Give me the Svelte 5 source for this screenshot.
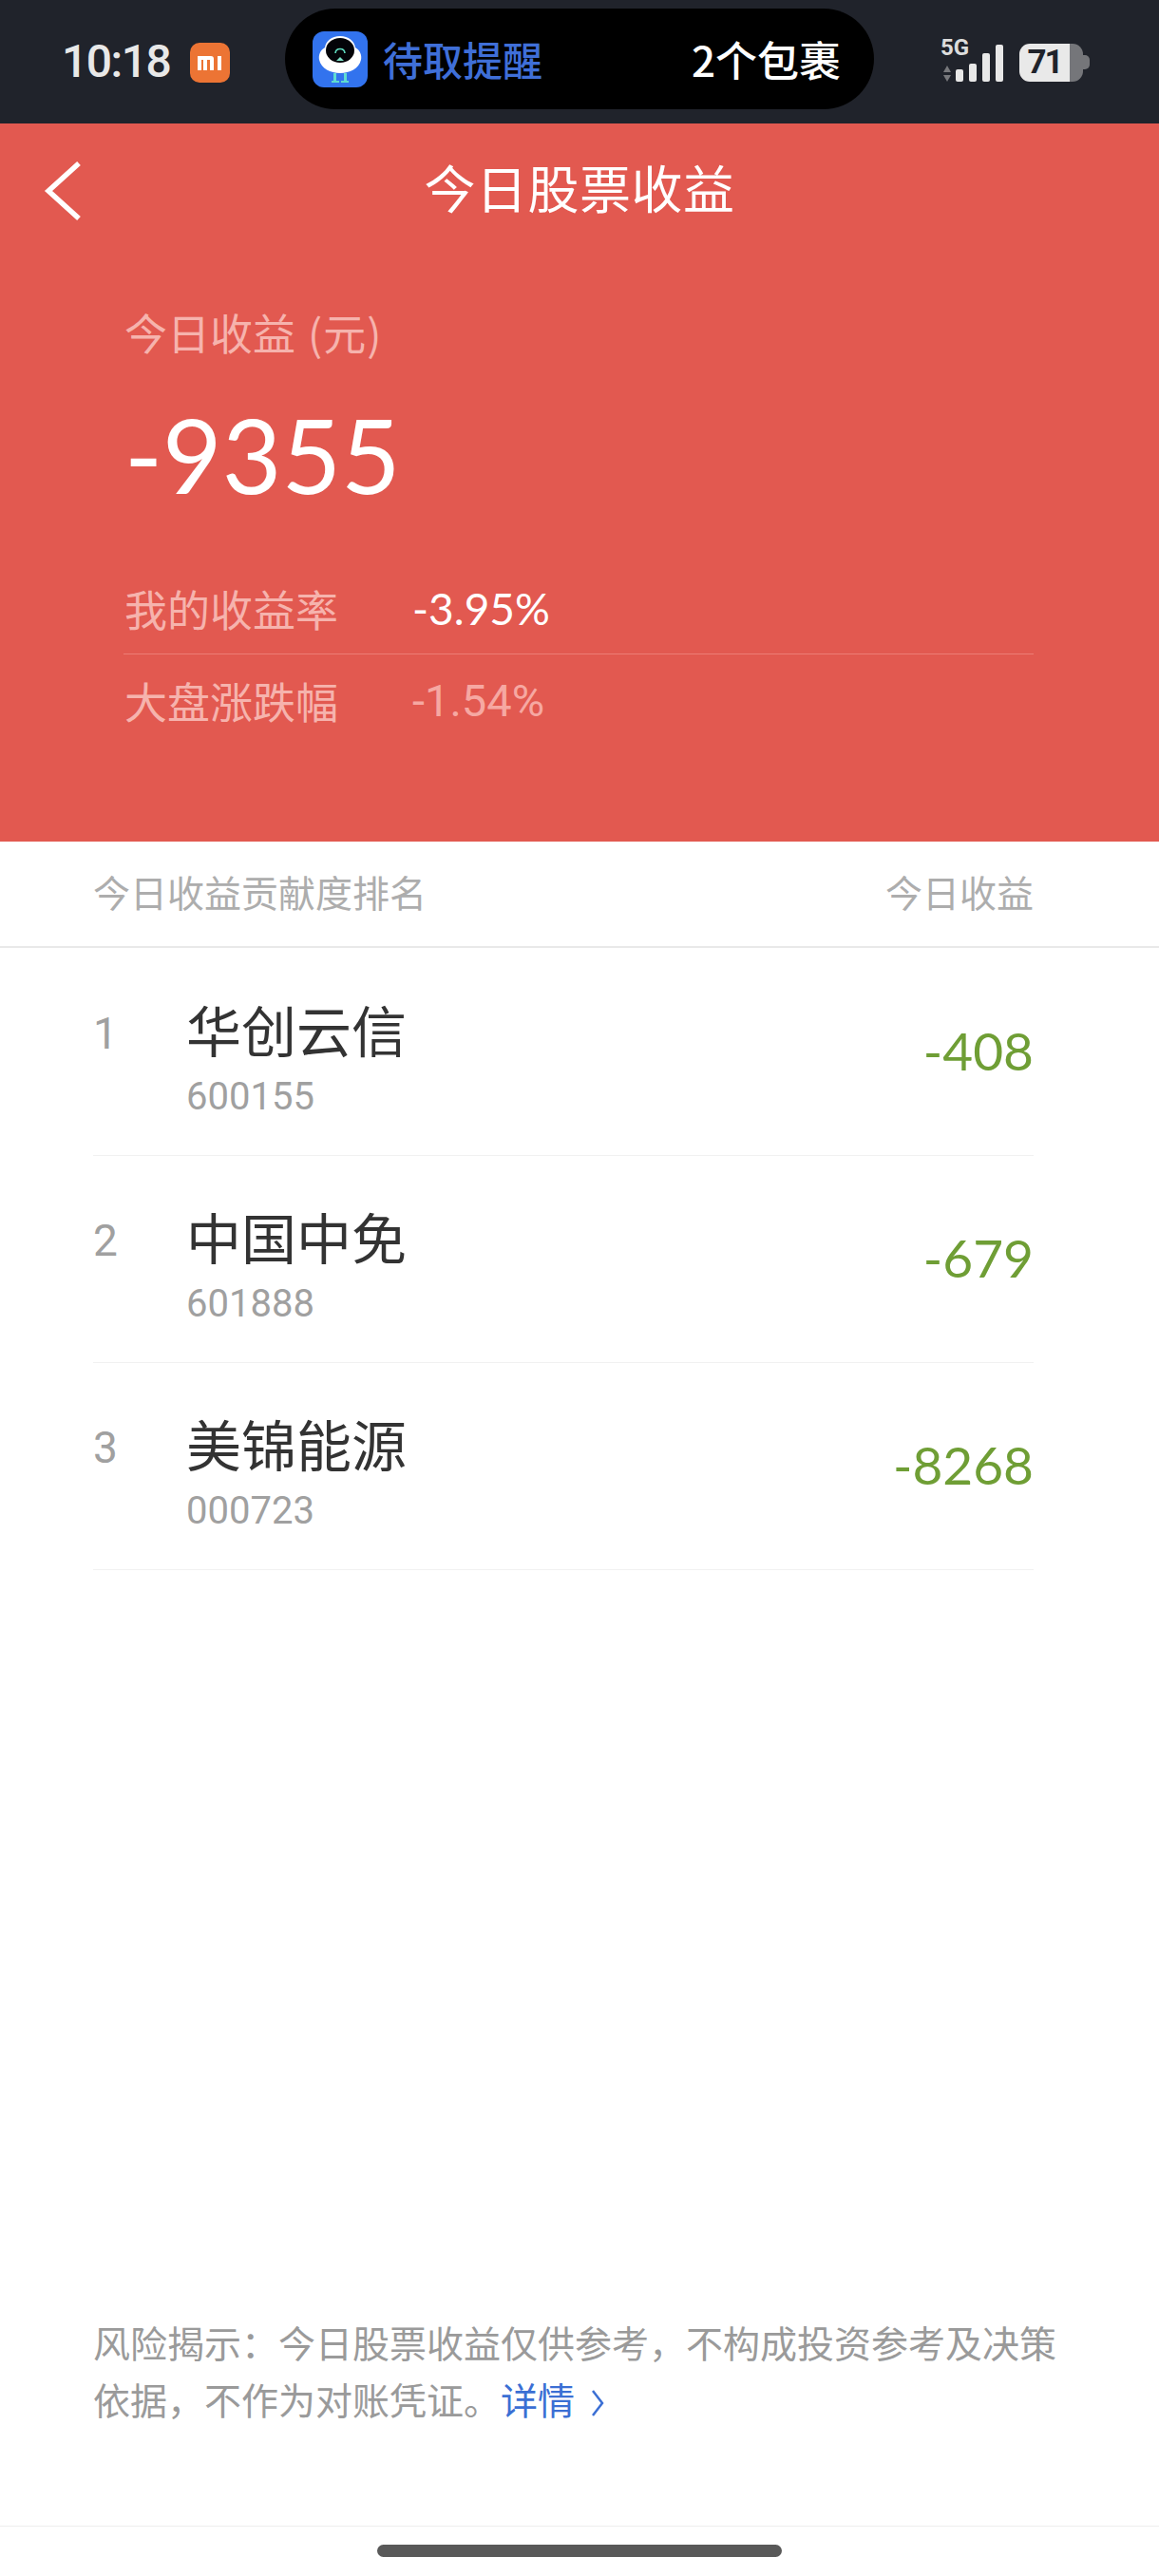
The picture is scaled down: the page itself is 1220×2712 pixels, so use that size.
<script>
  const rows = [
    { rank: 1, name: '华创云信', code: '600155', value: '-408' },
    { rank: 2, name: '中国中免', code: '601888', value: '-679' },
    { rank: 3, name: '美锦能源', code: '000723', value: '-8268' }
  ];
  const riskText = '风险揭示\uFF1A今日股票收益仅供参考\uFF0C不构成投资参考及决策依据\uFF0C不作为对账凭证\u3002';
</script>

<div class="page">
  <header class="status">
    <span class="time">10:18</span>
    <svg class="mi" viewBox="0 0 42 42" width="42" height="42" aria-hidden="true">
      <rect width="42" height="42" rx="10" fill="#ec7434"/>
      <path d="M8 14h14q3 0 3 3v12h-4V18h-3v11h-4V18h-2v11H8z M29 14h4v15h-4z" fill="#fff"/>
    </svg>
    <div class="island">
      <svg class="app" viewBox="0 0 58 59" width="58" height="59" aria-hidden="true">
        <rect width="58" height="59" rx="12" fill="#3273ee"/>
        <path d="M29 5c9 0 15 5 16 12 5 3 7 8 6 13-2 9-12 14-22 14S9 39 7 30c-1-5 1-10 6-13 1-7 7-12 16-12z" fill="#fff"/>
        <ellipse cx="29" cy="20" rx="15" ry="13" fill="#030308"/>
        <path d="M24 23c.5-6 9.500-6 10 0" fill="none" stroke="#5fdcc0" stroke-width="1.600"/>
        <path d="M29 27l4 4h-8z" fill="#7fe0c8"/>
        <path d="M22 44h3v8h3v2h-8v-2h2zM33 44h3v8h2v2h-8v-2h3z" fill="#5fdcd0"/>
      </svg>
      <span class="pending">待取提醒</span>
      <span class="parcels">2个包裹</span>
    </div>
    <div class="indicators">
      <div class="net">
        <span class="fiveg">5G</span>
        <svg viewBox="0 0 10 17" width="10" height="17" aria-hidden="true">
          <path d="M5 0l4 7H1z" fill="#77787c"/><path d="M5 17l4-7H1z" fill="#77787c"/>
        </svg>
      </div>
      <div class="bars">
        <i class="b1"></i><i class="b2"></i><i class="b3"></i><i class="b4"></i>
      </div>
      <div class="battery">
        <span class="level">71</span>
        <span class="rest"></span>
        <span class="cap"></span>
      </div>
    </div>
  </header>

  <section class="hero">
    <nav class="nav">
      <svg class="back" viewBox="0 0 40 66" width="40" height="66" aria-hidden="true">
        <path d="M37 4 5 33l32 29" fill="none" stroke="#fff" stroke-width="5.500"/>
      </svg>
      <h1>今日股票收益</h1>
    </nav>
    <div class="summary">
      <div class="label">今日收益 <span class="unit">(元)</span></div>
      <div class="total">-9355</div>
      <div class="stats">
        <div class="stat line">
          <span class="k">我的收益率</span><span class="v strong">-3.95%</span>
        </div>
        <div class="stat">
          <span class="k">大盘涨跌幅</span><span class="v alt">-1.54%</span>
        </div>
      </div>
    </div>
  </section>

  <div class="listhead">
    <span>今日收益贡献度排名</span><span>今日收益</span>
  </div>

  <ul class="list">
    {#each rows as r}
      <li class="row">
        <span class="rank">{r.rank}</span>
        <div class="stock">
          <div class="name">{r.name}</div>
          <div class="code">{r.code}</div>
        </div>
        <span class="value">{r.value}</span>
      </li>
    {/each}
  </ul>

  <p class="risk">{riskText}<span class="more">详情<svg viewBox="0 0 16 30" width="16" height="30" aria-hidden="true"><path d="M3 2l10 13L3 28" fill="none" stroke="#3b6fd4" stroke-width="2.500"/></svg></span></p>

  <footer class="home"><span class="pill"></span></footer>
</div>

<style>
  :global(body) { margin: 0; background: #fff; }
  .page {
    width: 1220px;
    height: 2712px;
    display: flex;
    flex-direction: column;
    font-family: "Noto Sans CJK SC", "Noto Sans", sans-serif;
    overflow: hidden;
  }
  .status {
    height: 130px;
    box-sizing: border-box;
    background: #20232b;
    display: flex;
    align-items: center;
    padding-left: 65px;
  }
  .time {
    width: 135px;
    flex: none;
    font: 500 48px/1 Roboto, sans-serif;
    color: #e8e8e8;
    letter-spacing: -1.500px;
  }
  .mi { margin-top: 2px; flex: none; }
  .island {
    margin-left: 58px;
    margin-top: -6px;
    width: 620px;
    height: 106px;
    flex: none;
    border-radius: 53px;
    background: #000;
    display: flex;
    align-items: center;
    box-sizing: border-box;
    padding-left: 29px;
  }
  .pending {
    margin-left: 16px;
    font-size: 42px;
    font-weight: 500;
    line-height: 1;
    color: #3f6fd8;
    white-space: nowrap;
  }
  .parcels {
    margin-left: 157px;
    font-size: 44px;
    font-weight: 500;
    line-height: 1;
    color: #fff;
    white-space: nowrap;
  }
  .indicators {
    margin-left: 70px;
    margin-top: -3px;
    display: flex;
    align-items: flex-end;
    height: 44px;
  }
  .net { display: flex; flex-direction: column; align-items: flex-start; width: 16px; }
  .fiveg {
    font: 700 24px/1 Roboto, sans-serif;
    color: #dcdcdc;
    width: 31px;
    margin-bottom: 7px;
    margin-top: -4px;
  }
  .net svg { margin-left: 2px; }
  .bars { display: flex; align-items: flex-end; gap: 6px; }
  .bars i { display: block; width: 8px; background: #e8e8e8; border-radius: 2px; }
  .b1 { height: 13px; }
  .b2 { height: 19px; }
  .b3 { height: 30px; }
  .b4 { height: 39px; }
  .battery {
    margin-left: 17px;
    display: flex;
    align-items: center;
    height: 40px;
    align-self: flex-end;
  }
  .level {
    width: 53px;
    height: 40px;
    border-radius: 11px 0 0 11px;
    background: #e9e9e9;
    color: #20232b;
    font: 700 35px/40px Roboto, sans-serif;
    text-align: center;
    letter-spacing: -2px;
  }
  .rest {
    width: 14px;
    height: 40px;
    border-radius: 0 11px 11px 0;
    background: #75767a;
  }
  .cap {
    width: 7px;
    height: 15px;
    border-radius: 0 5px 5px 0;
    background: #75767a;
  }
  .hero {
    height: 756px;
    background: #e25950;
    color: #fff;
    box-sizing: border-box;
  }
  .nav {
    height: 110px;
    display: flex;
    align-items: center;
    justify-content: center;
    position: relative;
    padding-top: 24px;
    box-sizing: border-box;
  }
  .back { position: absolute; left: 46px; top: 38px; }
  h1 {
    margin: 0;
    font-size: 54px;
    font-weight: 400;
    line-height: 1;
    letter-spacing: 0.500px;
    color: #fff;
  }
  .summary { padding: 0 132px 0 131px; }
  .label {
    margin-top: 80px;
    font-size: 45px;
    line-height: 60px;
    color: #f6b3ad;
    white-space: nowrap;
  }
  .unit { margin-left: 3px; letter-spacing: 1px; }
  .total {
    margin-top: 38px;
    font: 400 108px/120px Lato, sans-serif;
    color: #fff;
  }
  .stats { margin-top: 55px; margin-left: -1px; }
  .stat {
    height: 98px;
    display: flex;
    align-items: center;
    padding-left: 1px;
    box-sizing: border-box;
  }
  .stat.line { border-bottom: 1px solid #ec7d75; height: 96px; }
  .k { width: 305px; font-size: 45px; line-height: 60px; color: #f6b3ad; }
  .v { font: 400 46px/60px Lato, sans-serif; color: #f6a8a2; margin-left: -2px; }
  .v.strong { color: #fff; }
  .v.alt { font: 400 47px/60px Roboto, sans-serif; }
  .listhead {
    height: 112px;
    box-sizing: border-box;
    padding: 0 132px 6px 98px;
    display: flex;
    align-items: center;
    justify-content: space-between;
    border-bottom: 2px solid #e9e9e9;
    font-size: 39px;
    color: #adadad;
  }
  .list { list-style: none; margin: 0 132px 0 98px; padding: 1px 0 0; }
  .row {
    height: 218px;
    box-sizing: border-box;
    border-bottom: 1px solid #f1f1f1;
    display: flex;
    align-items: flex-start;
  }
  .rank {
    width: 98px;
    margin-top: 59px;
    font: 400 46px/60px Roboto, sans-serif;
    color: #a0a0a0;
  }
  .stock { flex: 1; padding-top: 49px; }
  .name {
    font-size: 58px;
    line-height: 70px;
    color: #333;
  }
  .code {
    margin-top: 12px;
    font: 400 40px/50px Roboto, sans-serif;
    color: #a0a0a0;
  }
  .value {
    margin-top: 77px;
    font: 400 55px/60px Lato, sans-serif;
    color: #6f9e35;
  }
  .risk {
    margin: auto 100px 0 98px;
    font-size: 39px;
    line-height: 60px;
    color: #9a9a9a;
  }
  .more { color: #3b6fd4; }
  .more svg { margin-left: 16px; vertical-align: -3px; }
  .home {
    margin-top: 104px;
    height: 53px;
    border-top: 1px solid #eee;
    box-sizing: border-box;
    display: flex;
    justify-content: center;
    padding-top: 19px;
  }
  .pill { width: 426px; height: 13px; border-radius: 7px; background: #595959; }
</style>
